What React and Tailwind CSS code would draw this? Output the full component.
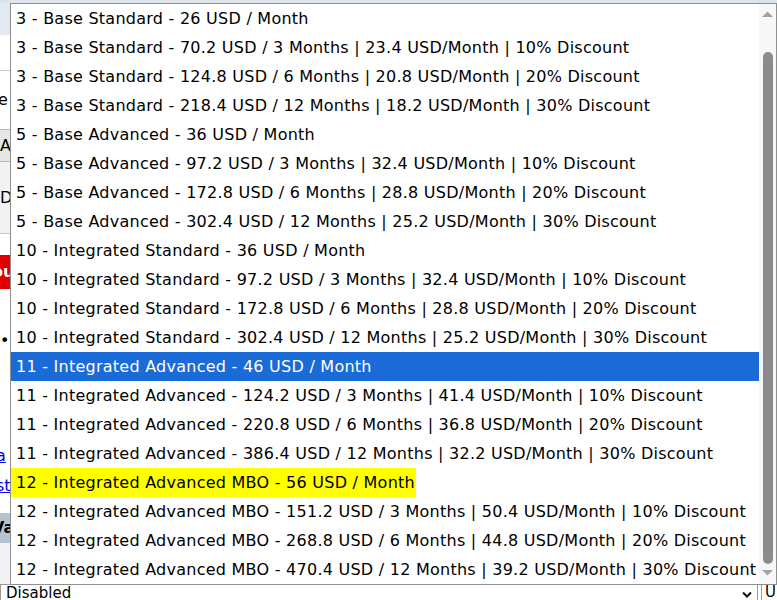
import React from 'react';

const options = [
  '3 - Base Standard - 26 USD / Month',
  '3 - Base Standard - 70.2 USD / 3 Months | 23.4 USD/Month | 10% Discount',
  '3 - Base Standard - 124.8 USD / 6 Months | 20.8 USD/Month | 20% Discount',
  '3 - Base Standard - 218.4 USD / 12 Months | 18.2 USD/Month | 30% Discount',
  '5 - Base Advanced - 36 USD / Month',
  '5 - Base Advanced - 97.2 USD / 3 Months | 32.4 USD/Month | 10% Discount',
  '5 - Base Advanced - 172.8 USD / 6 Months | 28.8 USD/Month | 20% Discount',
  '5 - Base Advanced - 302.4 USD / 12 Months | 25.2 USD/Month | 30% Discount',
  '10 - Integrated Standard - 36 USD / Month',
  '10 - Integrated Standard - 97.2 USD / 3 Months | 32.4 USD/Month | 10% Discount',
  '10 - Integrated Standard - 172.8 USD / 6 Months | 28.8 USD/Month | 20% Discount',
  '10 - Integrated Standard - 302.4 USD / 12 Months | 25.2 USD/Month | 30% Discount',
  '11 - Integrated Advanced - 46 USD / Month',
  '11 - Integrated Advanced - 124.2 USD / 3 Months | 41.4 USD/Month | 10% Discount',
  '11 - Integrated Advanced - 220.8 USD / 6 Months | 36.8 USD/Month | 20% Discount',
  '11 - Integrated Advanced - 386.4 USD / 12 Months | 32.2 USD/Month | 30% Discount',
  '12 - Integrated Advanced MBO - 56 USD / Month',
  '12 - Integrated Advanced MBO - 151.2 USD / 3 Months | 50.4 USD/Month | 10% Discount',
  '12 - Integrated Advanced MBO - 268.8 USD / 6 Months | 44.8 USD/Month | 20% Discount',
  '12 - Integrated Advanced MBO - 470.4 USD / 12 Months | 39.2 USD/Month | 30% Discount',
];

const SELECTED = 12;
const MARKED = 16;

function PageBehind() {
  return (
    <div className="w-full h-full flex flex-col font-['DejaVu_Sans',sans-serif] text-[16px] text-black">
      <div className="h-[3px] bg-[#dde4ec]"></div>
      <div className="flex-1 flex">
        <div className="w-[10px] flex flex-col">
          <div className="h-[32px] bg-[#e3e9f0]"></div>
          <div className="h-[36px] border-b border-[#c8c8c8]"></div>
          <div className="h-[58px] leading-[58px] -ml-[2px] overflow-hidden">e</div>
          <div className="h-[33px] bg-[#e6e6e6] border-y border-[#b8b8b8] leading-[31px] overflow-hidden">A</div>
          <div className="h-[72px] bg-[#f2f2f2] border-b border-[#c8c8c8] leading-[72px] overflow-hidden">D</div>
          <div className="h-[21px]"></div>
          <div className="h-[34px] bg-[#e00000] text-white font-bold leading-[34px] overflow-hidden -indent-[8px]">ou</div>
          <div className="h-[44px]"></div>
          <div className="h-[16px] leading-[16px] overflow-hidden">•</div>
          <div className="h-[92px]"></div>
          <div className="h-[30px] leading-[30px] text-[#0000ee] underline overflow-hidden -indent-[4px]">a</div>
          <div className="h-[30px] leading-[30px] text-[#0000ee] underline overflow-hidden -indent-[4px]">st</div>
          <div className="h-[12px]"></div>
          <div className="h-[30px] bg-[#b7c2cf] font-bold leading-[30px] overflow-hidden -indent-[8px]">Va</div>
          <div className="flex-1 bg-[#f0f2f5]"></div>
        </div>
        <div className="flex-1"></div>
      </div>
      <div className="h-[16px] flex">
        <div className="w-[758px] border border-[#9a9a9a] border-b-0 bg-white flex items-center justify-between pl-[5px] pr-[4px] text-[15px] leading-[16px] overflow-hidden">
          <span>Disabled</span>
          <svg width="12" height="8" viewBox="0 0 12 8" className="mt-[4px]">
            <path d="M2 1.5 L6 5.5 L10 1.5" fill="none" stroke="#111" strokeWidth="2" />
          </svg>
        </div>
        <div className="w-[3px]"></div>
        <div className="flex-1 border-l border-[#9a9a9a] pl-[3px] text-[15px] leading-[16px] overflow-hidden">U</div>
      </div>
    </div>
  );
}

function Scrollbar() {
  return (
    <div className="w-[17px] bg-[#f7f7f7] flex flex-col items-center">
      <svg width="11" height="7" viewBox="0 0 11 7" className="mt-[7px]">
        <path d="M0 6 L5.5 0.5 L11 6 Z" fill="#a3a3a3" />
      </svg>
      <div className="w-[10px] mt-[34px] h-[512px] rounded-full bg-[#8b8b8b]"></div>
      <svg width="11" height="7" viewBox="0 0 11 7" className="mt-[5px]">
        <path d="M0 1 L5.5 6.5 L11 1 Z" fill="#a3a3a3" />
      </svg>
    </div>
  );
}

export default function App() {
  return (
    <div className="w-[777px] h-[600px] relative overflow-hidden bg-white">
      <PageBehind />
      <div className="absolute left-[10px] top-[3px] w-[767px] h-[582px] bg-white border border-[#8f8f8f] flex font-['DejaVu_Sans',sans-serif] text-[16px] tracking-[0.25px] text-black">
        <ul className="flex-1 flex flex-col">
          {options.map((label, i) => (
            <li
              key={i}
              className={`h-[29px] leading-[29px] whitespace-nowrap ${i === SELECTED ? 'bg-[#1a6ad8] text-white' : ''}`}
            >
              {i === MARKED ? (
                <span className="inline-block bg-[#ffff00] pl-[5px] pr-[1px]">{label}</span>
              ) : (
                <span className="pl-[5px]">{label}</span>
              )}
            </li>
          ))}
        </ul>
        <Scrollbar />
      </div>
    </div>
  );
}
